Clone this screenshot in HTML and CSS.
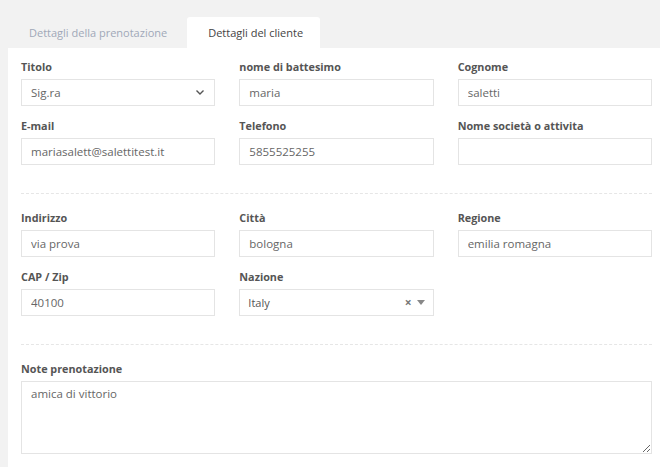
FILE: index.html
```html
<!DOCTYPE html>
<html lang="it">
<head>
<meta charset="utf-8">
<title>Dettagli del cliente</title>
<link rel="stylesheet" href="styles.css">
</head>
<body>
<div class="tabs">
  <div class="tab">Dettagli della prenotazione</div>
  <div class="tab active">Dettagli del cliente</div>
</div>
<div class="panel">
  <div class="grid">
    <div class="field">
      <label class="label">Titolo</label>
      <div class="box select">
        <span>Sig.ra</span>
        <svg class="chev" width="10" height="7" viewBox="0 0 10 7"><path d="M1.5 1.5 L5 5 L8.5 1.5" fill="none" stroke="#555" stroke-width="1.4"/></svg>
      </div>
    </div>
    <div class="field">
      <label class="label">nome di battesimo</label>
      <input class="box" type="text" value="maria">
    </div>
    <div class="field">
      <label class="label">Cognome</label>
      <input class="box" type="text" value="saletti">
    </div>
    <div class="field">
      <label class="label">E-mail</label>
      <input class="box" type="text" value="mariasalett@salettitest.it">
    </div>
    <div class="field">
      <label class="label">Telefono</label>
      <input class="box" type="text" value="5855525255">
    </div>
    <div class="field">
      <label class="label">Nome società o attivita</label>
      <input class="box" type="text" value="">
    </div>
  </div>
  <hr class="sep">
  <div class="grid">
    <div class="field">
      <label class="label">Indirizzo</label>
      <input class="box" type="text" value="via prova">
    </div>
    <div class="field">
      <label class="label">Città</label>
      <input class="box" type="text" value="bologna">
    </div>
    <div class="field">
      <label class="label">Regione</label>
      <input class="box" type="text" value="emilia romagna">
    </div>
    <div class="field">
      <label class="label">CAP / Zip</label>
      <input class="box" type="text" value="40100">
    </div>
    <div class="field">
      <label class="label">Nazione</label>
      <div class="box select s2">
        <span class="s2-text">Italy</span>
        <span class="s2-icons">
          <span class="s2-x">×</span>
          <svg width="8" height="5" viewBox="0 0 8 5"><path d="M0 0 H8 L4 5 Z" fill="#888"/></svg>
        </span>
      </div>
    </div>
  </div>
  <hr class="sep">
  <div class="field">
    <label class="label">Note prenotazione</label>
    <textarea class="box area">amica di vittorio</textarea>
  </div>
</div>
</body>
</html>
```
FILE: styles.css
```css
* { box-sizing: border-box; }
html, body {
  margin: 0;
  padding: 0;
  background: #f2f2f2;
  font-family: "Open Sans", "Liberation Sans", sans-serif;
  color: #555;
}
.tabs {
  display: flex;
  padding: 17px 0 0 9px;
}
.tab {
  height: 31px;
  padding: 0 20px;
  display: flex;
  align-items: center;
  font-size: 11px;
  color: #a0a8b8;
}
.tab.active {
  background: #fff;
  color: #444;
  border-radius: 3px 3px 0 0;
  padding: 0 17px 0 21px;
}
.panel {
  margin-left: 8px;
  background: #fff;
  padding: 11px 8px 20px 13px;
  min-height: 419px;
}
.grid {
  display: grid;
  grid-template-columns: repeat(3, 1fr);
  column-gap: 24px;
  row-gap: 12px;
}
.field {
  display: flex;
  flex-direction: column;
}
.label {
  font-size: 10.8px;
  font-weight: 700;
  line-height: 16px;
  color: #555;
  margin-bottom: 4px;
}
.box {
  height: 27px;
  border: 1px solid #e4e4e4;
  background: #fff;
  font-family: "Open Sans", "Liberation Sans", sans-serif;
  font-size: 11.5px;
  color: #666;
  padding: 0 9px;
  margin: 0;
  outline: none;
  border-radius: 0;
  width: 100%;
}
.select {
  display: flex;
  align-items: center;
  justify-content: space-between;
}
.s2 { padding: 0 8px 0 8px; }
.s2-text { font-size: 11px; color: #555; }
.s2-icons {
  display: flex;
  align-items: center;
  gap: 5px;
}
.s2-x {
  font-size: 12px;
  font-weight: 700;
  color: #777;
  line-height: 1;
}
.sep {
  border: 0;
  border-top: 1px dashed #e6e6e6;
  margin: 28px 0 16px;
  height: 0;
}
.area {
  height: 73px;
  padding: 3px 9px;
  resize: vertical;
  line-height: 17px;
}
```
